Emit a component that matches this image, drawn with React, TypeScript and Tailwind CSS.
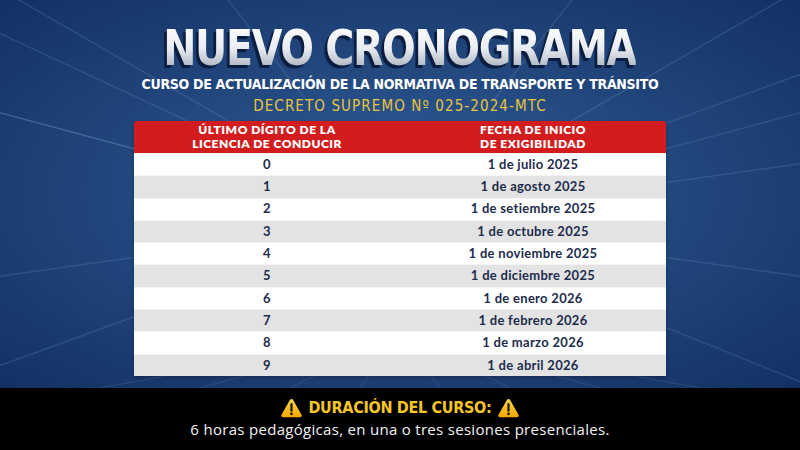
import React from "react";

const rows = [
  ["0", "1 de julio 2025"],
  ["1", "1 de agosto 2025"],
  ["2", "1 de setiembre 2025"],
  ["3", "1 de octubre 2025"],
  ["4", "1 de noviembre 2025"],
  ["5", "1 de diciembre 2025"],
  ["6", "1 de enero 2026"],
  ["7", "1 de febrero 2026"],
  ["8", "1 de marzo 2026"],
  ["9", "1 de abril 2026"],
];

// light rays behind the content
function Rays() {
  const cx = 400;
  const cy = 220;
  const angles = [-165, -150, -128, -52, -30, -15, 8, 22, 160, 172, 195, 205, 340, 352];
  return (
    <svg className="absolute inset-0" width="800" height="388" viewBox="0 0 800 388">
      {angles.map((a) => {
        const r = (a * Math.PI) / 180;
        return (
          <line
            key={a}
            x1={cx + Math.cos(r) * 150}
            y1={cy + Math.sin(r) * 150}
            x2={cx + Math.cos(r) * 700}
            y2={cy + Math.sin(r) * 700}
            stroke="#7fa3d6"
            strokeOpacity="0.2"
            strokeWidth="1.5"
          />
        );
      })}
      {[-300, -200, -110, -40, 40, 110, 200, 300].map((dx) => (
        <line
          key={dx}
          x1={400 + dx * 0.6}
          y1={366}
          x2={400 + dx}
          y2={388}
          stroke="#7fa3d6"
          strokeOpacity="0.2"
          strokeWidth="1"
        />
      ))}
    </svg>
  );
}

function Warn() {
  return (
    <svg width="21" height="20" viewBox="0 0 24 22">
      <defs>
        <linearGradient id="wg" x1="0" y1="0" x2="0" y2="1">
          <stop offset="0" stopColor="#ffd84a" />
          <stop offset="1" stopColor="#f2a800" />
        </linearGradient>
      </defs>
      <path
        d="M10.3 1.6 C11.1 0.3 12.9 0.3 13.7 1.6 L23.4 18.6 C24.1 19.9 23.2 21.5 21.7 21.5 L2.3 21.5 C0.8 21.5 -0.1 19.9 0.6 18.6 Z"
        fill="url(#wg)"
      />
      <path d="M12 6.5 L12 14" stroke="#1a1a1a" strokeWidth="2.6" strokeLinecap="round" />
      <circle cx="12" cy="17.6" r="1.6" fill="#1a1a1a" />
    </svg>
  );
}

export default function App() {
  return (
    <div className="w-[800px] h-[450px] overflow-hidden flex flex-col bg-black">
      <div className="relative h-[388px] bg-[radial-gradient(ellipse_at_50%_50%,#31609e_0%,#23497f_45%,#133064_100%)]">
        <Rays />
        <div className="relative flex flex-col items-center pt-[24px]">
          <h1 className="scale-x-[0.9] font-['DejaVu_Sans_Condensed','DejaVu_Sans',sans-serif] font-bold text-[49px] leading-none tracking-[-1.5px] bg-gradient-to-b from-white via-[#e9ecf1] to-[#9ea6b3] bg-clip-text text-transparent drop-shadow-[-3px_3px_0_#0a1c3f]">
            NUEVO CRONOGRAMA
          </h1>
          <p className="mt-[2px] font-['DejaVu_Sans_Condensed','DejaVu_Sans',sans-serif] font-bold text-[14px] leading-[18px] text-white tracking-[-0.3px]">
            CURSO DE ACTUALIZACIÓN DE LA NORMATIVA DE TRANSPORTE Y TRÁNSITO
          </p>
          <p className="mt-[3px] font-['DejaVu_Sans_Condensed','DejaVu_Sans',sans-serif] text-[15px] leading-[20px] text-[#e9c53c] tracking-[1.1px]">
            DECRETO SUPREMO Nº 025-2024-MTC
          </p>
          <div className="mt-[5px] w-[532px] rounded-t-[3px] overflow-hidden shadow-[0_2px_4px_rgba(0,0,0,0.25)] font-['Lato','Noto_Sans',sans-serif]">
            <div className="grid grid-cols-2 h-[32px] bg-[#d21c1e] items-center text-white font-extrabold text-[12px] leading-[14.5px] tracking-[0.5px] text-center">
              <div className="flex flex-col">
                <span>ÚLTIMO DÍGITO DE LA</span>
                <span>LICENCIA DE CONDUCIR</span>
              </div>
              <div className="flex flex-col">
                <span>FECHA DE INICIO</span>
                <span>DE EXIGIBILIDAD</span>
              </div>
            </div>
            {rows.map(([d, f], i) => (
              <div
                key={d}
                className={
                  "grid grid-cols-2 h-[22.3px] items-center text-center text-[13px] font-bold tracking-[0.3px] text-[#1d2c4c] border-t border-[#f4f4f4] " +
                  (i % 2 === 0 ? "bg-white" : "bg-[#e3e3e3]")
                }
              >
                <div>{d}</div>
                <div>{f}</div>
              </div>
            ))}
          </div>
        </div>
      </div>
      <div className="h-[62px] bg-black flex flex-col items-center pt-[10px]">
        <div className="flex items-center gap-[6px]">
          <Warn />
          <span className="font-['DejaVu_Sans_Condensed','DejaVu_Sans',sans-serif] font-bold text-[16px] leading-[20px] text-[#f6c623] tracking-[-0.3px]">
            DURACIÓN DEL CURSO:
          </span>
          <Warn />
        </div>
        <p className="mt-[1px] font-['Open_Sans','Noto_Sans',sans-serif] text-[15px] leading-[20px] text-[#f2f2f2] tracking-[0.3px]">
          6 horas pedagógicas, en una o tres sesiones presenciales.
        </p>
      </div>
    </div>
  );
}
